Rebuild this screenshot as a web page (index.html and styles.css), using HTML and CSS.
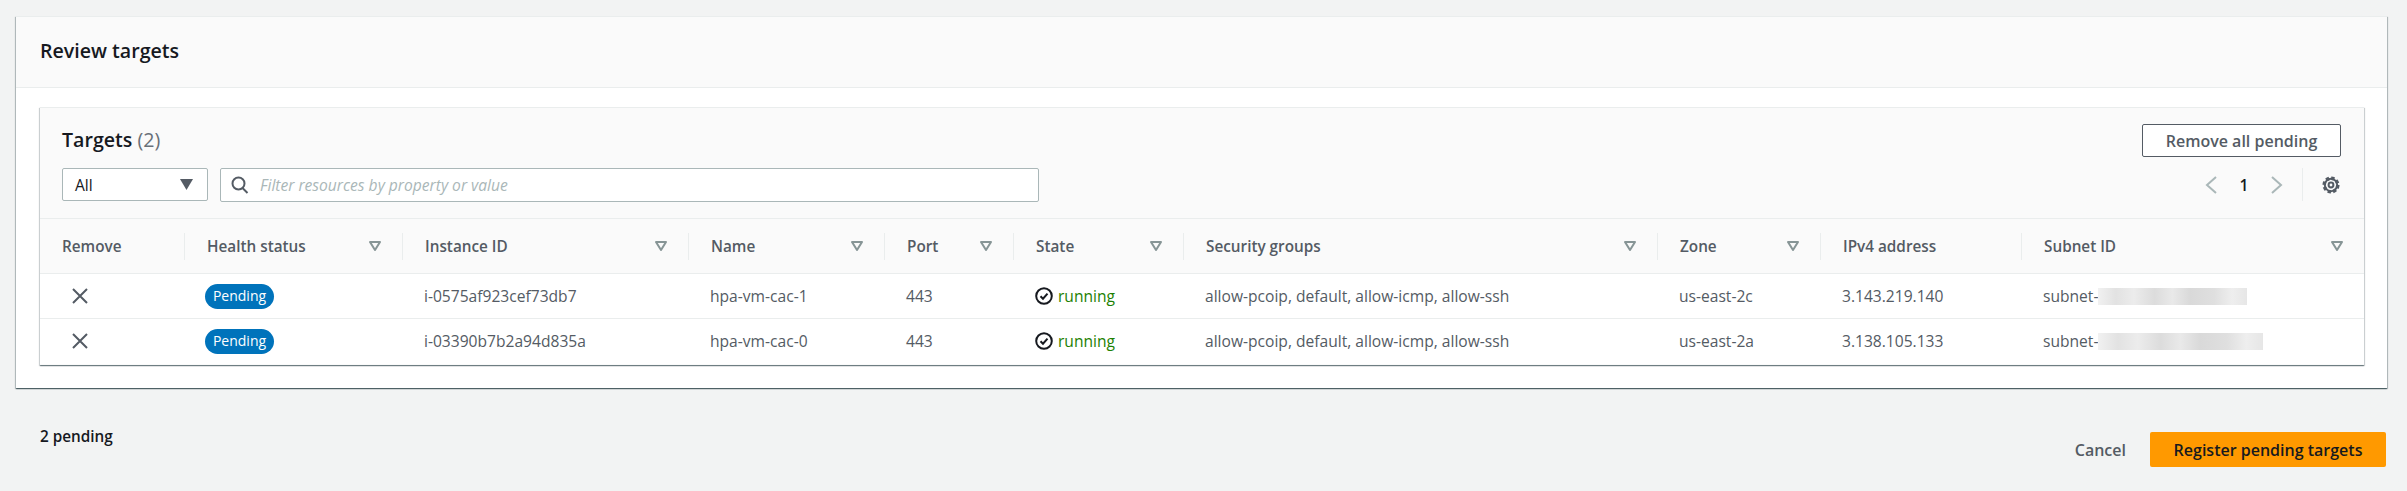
FILE: index.html
```html
<!DOCTYPE html>
<html lang="en">
<head>
    <meta charset="UTF-8">
    <meta name="viewport" content="width=device-width, initial-scale=1.0">
    <title>Review targets</title>
    <link rel="stylesheet" href="styles.css">
</head>
<body>
    <svg class="icon-defs" width="0" height="0" aria-hidden="true">
        <symbol id="sort" viewBox="0 0 12 10">
            <path d="M1 1h10L6 9z" fill="none" stroke="currentColor" stroke-width="2" stroke-linejoin="round"/>
        </symbol>
        <symbol id="remove" viewBox="0 0 16 16">
            <path d="M1 1l14 14M15 1L1 15" fill="none" stroke="currentColor" stroke-width="2"/>
        </symbol>
        <symbol id="ok" viewBox="0 0 18 18">
            <circle cx="9" cy="9" r="7.8" fill="none" stroke="currentColor" stroke-width="2"/>
            <path d="M5.5 9.2l2.5 2.5 4.5-5" fill="none" stroke="currentColor" stroke-width="2"/>
        </symbol>
    </svg>

    <section class="card">
        <header class="card-header">
            <h2>Review targets</h2>
        </header>
        <div class="card-body">
            <div class="panel">
                <div class="toolbar">
                    <div class="toolbar-left">
                        <h3>Targets <span class="count">(2)</span></h3>
                        <div class="filters">
                            <div class="select">
                                <span>All</span>
                                <svg width="13" height="11" viewBox="0 0 13 11"><path d="M0 0h13L6.500 11z" fill="#545b64"/></svg>
                            </div>
                            <div class="search">
                                <svg width="18" height="18" viewBox="0 0 18 18"><circle cx="7.500" cy="7.500" r="6" fill="none" stroke="#545b64" stroke-width="2"/><path d="M11.500 12l5 5" stroke="#545b64" stroke-width="2" fill="none"/></svg>
                                <span>Filter resources by property or value</span>
                            </div>
                        </div>
                    </div>
                    <div class="toolbar-right">
                        <button class="btn-outline">Remove all pending</button>
                        <div class="pager">
                            <svg width="14" height="20" viewBox="0 0 14 20"><path d="M12 2L3 10l9 8" fill="none" stroke="#aab7b8" stroke-width="2"/></svg>
                            <span class="page-num">1</span>
                            <svg width="14" height="20" viewBox="0 0 14 20"><path d="M2 2l9 8-9 8" fill="none" stroke="#aab7b8" stroke-width="2"/></svg>
                            <span class="pager-sep">
                                <svg width="18" height="18" viewBox="0 0 18 18"><circle cx="9" cy="9" r="6.200" fill="none" stroke="#545b64" stroke-width="2"/><circle cx="9" cy="9" r="6.800" fill="none" stroke="#545b64" stroke-width="3.500" stroke-dasharray="3.200 2.140"/><circle cx="9" cy="9" r="2.400" fill="none" stroke="#545b64" stroke-width="2"/></svg>
                            </span>
                        </div>
                    </div>
                </div>

                <table class="targets">
                    <colgroup>
                        <col class="c-remove"><col class="c-health"><col class="c-id"><col class="c-name"><col class="c-port">
                        <col class="c-state"><col class="c-groups"><col class="c-zone"><col class="c-ip"><col class="c-subnet">
                    </colgroup>
                    <thead>
                        <tr>
                            <th><div class="th-inner">Remove</div></th>
                            <th><div class="th-inner">Health status <svg class="sort"><use href="#sort"/></svg></div></th>
                            <th><div class="th-inner">Instance ID <svg class="sort"><use href="#sort"/></svg></div></th>
                            <th><div class="th-inner">Name <svg class="sort"><use href="#sort"/></svg></div></th>
                            <th><div class="th-inner">Port <svg class="sort"><use href="#sort"/></svg></div></th>
                            <th><div class="th-inner">State <svg class="sort"><use href="#sort"/></svg></div></th>
                            <th><div class="th-inner">Security groups <svg class="sort"><use href="#sort"/></svg></div></th>
                            <th><div class="th-inner">Zone <svg class="sort"><use href="#sort"/></svg></div></th>
                            <th><div class="th-inner">IPv4 address</div></th>
                            <th><div class="th-inner">Subnet ID <svg class="sort"><use href="#sort"/></svg></div></th>
                        </tr>
                    </thead>
                    <tbody>
                        <tr>
                            <td class="td-remove"><svg class="x"><use href="#remove"/></svg></td>
                            <td class="td-health"><span class="badge">Pending</span></td>
                            <td>i-0575af923cef73db7</td>
                            <td>hpa-vm-cac-1</td>
                            <td>443</td>
                            <td><span class="state"><svg class="ok"><use href="#ok"/></svg>running</span></td>
                            <td>allow-pcoip, default, allow-icmp, allow-ssh</td>
                            <td>us-east-2c</td>
                            <td>3.143.219.140</td>
                            <td><span class="subnet">subnet-<span class="blur blur-a"></span></span></td>
                        </tr>
                        <tr>
                            <td class="td-remove"><svg class="x"><use href="#remove"/></svg></td>
                            <td class="td-health"><span class="badge">Pending</span></td>
                            <td>i-03390b7b2a94d835a</td>
                            <td>hpa-vm-cac-0</td>
                            <td>443</td>
                            <td><span class="state"><svg class="ok"><use href="#ok"/></svg>running</span></td>
                            <td>allow-pcoip, default, allow-icmp, allow-ssh</td>
                            <td>us-east-2a</td>
                            <td>3.138.105.133</td>
                            <td><span class="subnet">subnet-<span class="blur blur-b"></span></span></td>
                        </tr>
                    </tbody>
                </table>
            </div>
        </div>
    </section>

    <footer class="page-footer">
        <div class="pending-count">2 pending</div>
        <div class="actions">
            <a class="cancel">Cancel</a>
            <button class="btn-primary">Register pending targets</button>
        </div>
    </footer>
</body>
</html>
```

FILE: styles.css
```css
* {
    box-sizing: border-box;
}
body {
    margin: 0;
    padding-top: 16px;
    background-color: #f2f3f3;
    font-family: "Open Sans", "Liberation Sans", sans-serif;
    font-size: 15.6px;
    color: #16191f;
    height: 491px;
    overflow: hidden;
}
.icon-defs {
    position: absolute;
}
.card {
    margin: 0 20px 0 16px;
    height: 372px;
    background-color: #fff;
    box-shadow: 0 1px 1px 0 rgba(0, 28, 36, 0.5), 1px 1px 1px 0 rgba(0, 28, 36, 0.2), -1px 1px 1px 0 rgba(0, 28, 36, 0.2);
    border-top: 1px solid #eaeded;
}
.card-header {
    height: 71px;
    padding: 0 24px 3px;
    display: flex;
    align-items: center;
    background-color: #fafafa;
    border-bottom: 1px solid #eaeded;
}
h2 {
    margin: 0;
    font-size: 19.6px;
    font-weight: 600;
}
.card-body {
    padding: 19px 23px 0 24px;
}
.panel {
    height: 258px;
    background-color: #fafafa;
    border-top: 1px solid #eaeded;
    box-shadow: 0 1px 1px 0 rgba(0, 28, 36, 0.4), 1px 1px 1px 0 rgba(0, 28, 36, 0.15), -1px 1px 1px 0 rgba(0, 28, 36, 0.15);
}
.toolbar {
    height: 110px;
    padding: 16px 23px 0 22px;
    display: flex;
    justify-content: space-between;
}
h3 {
    margin: 0;
    height: 32px;
    line-height: 32px;
    font-size: 19.6px;
    font-weight: 600;
}
.count {
    font-weight: 400;
    color: #687078;
}
.filters {
    margin-top: 12px;
    display: flex;
    gap: 12px;
}
.select {
    width: 146px;
    height: 33px;
    padding: 0 14px 0 12px;
    display: flex;
    align-items: center;
    justify-content: space-between;
    background-color: #fff;
    border: 1px solid #aab7b8;
    border-radius: 2px;
}
.search {
    width: 819px;
    height: 34px;
    padding: 0 10px;
    display: flex;
    align-items: center;
    gap: 11px;
    background-color: #fff;
    border: 1px solid #aab7b8;
    border-radius: 2px;
    font-style: italic;
    color: #aab7b8;
}
.toolbar-right {
    display: flex;
    flex-direction: column;
    align-items: flex-end;
}
.btn-outline {
    width: 199px;
    height: 33px;
    background-color: #fff;
    border: 1px solid #545b64;
    border-radius: 2px;
    font-family: inherit;
    font-size: 16px;
    font-weight: 600;
    color: #545b64;
}
.pager {
    margin-top: 11px;
    display: flex;
    align-items: center;
    height: 33px;
}
.page-num {
    width: 52px;
    text-align: center;
    font-weight: 600;
}
.pager-sep {
    margin-left: 18px;
    height: 33px;
    width: 39px;
    padding-left: 19px;
    display: flex;
    align-items: center;
    border-left: 1px solid #eaeded;
}
.targets {
    width: 100%;
    table-layout: fixed;
    border-collapse: collapse;
}
.c-remove { width: 144px; }
.c-health { width: 218px; }
.c-id { width: 286px; }
.c-name { width: 196px; }
.c-port { width: 129px; }
.c-state { width: 170px; }
.c-groups { width: 474px; }
.c-zone { width: 163px; }
.c-ip { width: 201px; }
th {
    height: 55px;
    padding: 0;
    text-align: left;
    font-size: 15.3px;
    font-weight: 600;
    color: #545b64;
    border-top: 1px solid #eaeded;
    border-bottom: 1px solid #eaeded;
}
.th-inner {
    height: 27px;
    padding: 0 21px 0 22px;
    display: flex;
    align-items: center;
    justify-content: space-between;
    border-left: 1px solid #eaeded;
}
th:first-child .th-inner {
    border-left: none;
}
.sort {
    width: 12px;
    height: 10px;
    color: #879596;
}
td {
    height: 45px;
    padding: 0 0 0 22px;
    background-color: #fff;
    border-bottom: 1px solid #eaeded;
    color: #545b64;
    white-space: nowrap;
}
tbody tr:last-child td {
    border-bottom: none;
}
.td-remove {
    padding-left: 32px;
}
.td-health {
    padding-left: 21px;
}
.x {
    width: 16px;
    height: 16px;
    color: #545b64;
    display: block;
}
.badge {
    display: inline-block;
    width: 69px;
    height: 25px;
    line-height: 24px;
    text-align: center;
    background-color: #0073bb;
    border-radius: 13px;
    font-size: 14px;
    font-weight: 500;
    color: #fff;
}
.state {
    display: flex;
    align-items: center;
    gap: 5px;
    color: #1d8102;
}
.ok {
    width: 18px;
    height: 18px;
    color: #16191f;
}
.subnet {
    display: flex;
    align-items: center;
}
/* redacted part of the subnet id, a smear of grey */
.blur {
    display: block;
    height: 17px;
    background: linear-gradient(90deg, #f1f1f1, #e2e2e2 12%, #ececec 24%, #dcdcdc 38%, #e9e9e9 50%, #d9d9d9 62%, #dfdfdf 78%, #eeeeee 90%, #e6e6e6);
}
.blur-a { width: 149px; }
.blur-b { width: 165px; }
.page-footer {
    padding: 36px 21px 0 40px;
    display: flex;
    justify-content: space-between;
}
.pending-count {
    line-height: 24px;
    font-size: 15.3px;
    font-weight: 600;
}
.actions {
    margin-top: 8px;
    display: flex;
    align-items: center;
    gap: 24px;
}
.cancel {
    font-size: 16px;
    font-weight: 600;
    color: #545b64;
}
.btn-primary {
    width: 236px;
    height: 35px;
    background-color: #f90;
    border: none;
    border-radius: 2px;
    font-family: inherit;
    font-size: 16px;
    font-weight: 600;
    color: #16191f;
}
```
